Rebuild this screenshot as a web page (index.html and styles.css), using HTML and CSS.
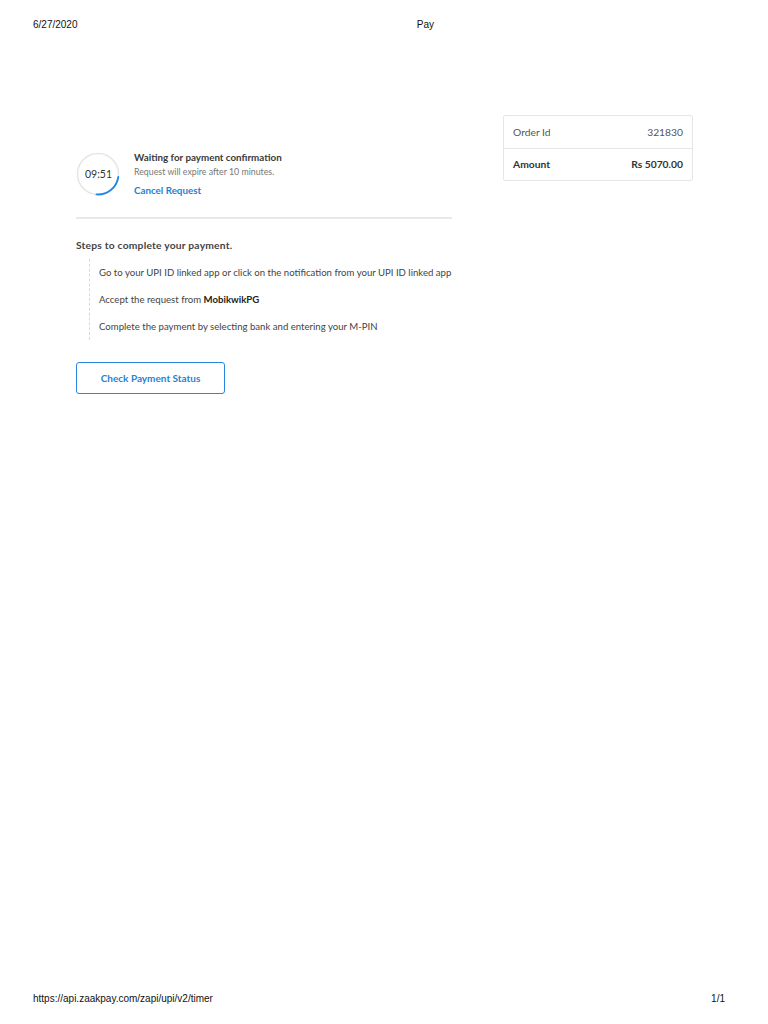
FILE: index.html
```html
<!DOCTYPE html>
<html>
<head>
<meta charset="utf-8">
<link rel="stylesheet" href="styles.css">
</head>
<body>
<div class="page">
  <header class="print-head">
    <span class="date">6/27/2020</span>
    <span class="title">Pay</span>
  </header>
  <main class="content">
    <section class="left">
      <div class="waiting">
        <div class="timer">
          <svg class="ring" width="44" height="44" viewBox="0 0 44 44">
            <circle cx="22" cy="22" r="20.5" fill="none" stroke="#e6e6e6" stroke-width="1.6"/>
            <path d="M42.3 25 A20.5 20.5 0 0 1 20.5 42.45" fill="none" stroke="#1e88e5" stroke-width="1.8" stroke-linecap="round"/>
          </svg>
          <span class="time">09:51</span>
        </div>
        <div class="wait-text">
          <div class="wait-title">Waiting for payment confirmation</div>
          <div class="wait-sub">Request will expire after 10 minutes.</div>
          <a class="cancel">Cancel Request</a>
        </div>
      </div>
      <div class="divider"></div>
      <div class="steps-title">Steps to complete your payment.</div>
      <ul class="steps">
        <li>Go to your UPI ID linked app or click on the notification from your UPI ID linked app</li>
        <li>Accept the request from <span class="strong">MobikwikPG</span></li>
        <li>Complete the payment by selecting bank and entering your M-PIN</li>
      </ul>
      <button class="check">Check Payment Status</button>
    </section>
    <aside class="order">
      <div class="row"><span>Order Id</span><span>321830</span></div>
      <div class="row bold"><span>Amount</span><span>Rs 5070.00</span></div>
    </aside>
  </main>
  <footer class="print-foot">
    <span>https://api.zaakpay.com/zapi/upi/v2/timer</span>
    <span>1/1</span>
  </footer>
</div>
</body>
</html>
```
FILE: styles.css
```css
* { box-sizing: border-box; }
html, body { margin: 0; padding: 0; background: #fff; }
.page {
  width: 768px;
  height: 1024px;
  display: flex;
  flex-direction: column;
  font-family: Lato, "Open Sans", sans-serif;
  color: #333;
}
.print-head, .print-foot {
  display: flex;
  justify-content: space-between;
  font-family: "Liberation Sans", Arial, sans-serif;
  font-size: 10px;
  color: #111;
}
.print-head {
  padding: 19px 0 0 33px;
  width: 434px;
  height: 115px;
}
.print-foot {
  margin-top: auto;
  padding: 0 43px 20px 33px;
}
.content {
  display: flex;
  align-items: flex-start;
  padding-left: 76px;
}
.left { width: 376px; }
.waiting {
  display: flex;
  align-items: flex-start;
  padding-top: 37px;
  padding-bottom: 19px;
}
.timer {
  position: relative;
  width: 44px;
  height: 44px;
  margin-right: 14px;
}
.ring { display: block; position: absolute; left: 0; top: 0; }
.time {
  position: absolute;
  left: 0; top: 0; width: 44px; height: 44px;
  display: flex; align-items: center; justify-content: center;
  font-size: 10.5px;
  color: #333;
  padding-left: 1px;
}
.wait-text { margin-top: -2px; }
.wait-title { font-size: 9.8px; font-weight: 700; color: #3a3a3a; line-height: 14px; }
.wait-sub { font-size: 8.8px; color: #777; line-height: 16px; }
.cancel { display: block; font-size: 9.8px; font-weight: 700; color: #1e7fd6; line-height: 16px; margin-top: 2px; }
.divider { height: 2px; background: #e8e8e8; }
.steps-title {
  font-size: 10.3px; font-weight: 700; color: #444;
  margin-top: 19px; line-height: 14px;
  letter-spacing: 0.2px;
}
.steps {
  list-style: none;
  margin: 7px 0 0 13px;
  padding: 0 0 0 9px;
  border-left: 1px dashed #d8d8d8;
}
.steps li {
  font-size: 9.6px;
  color: #444;
  line-height: 13px;
  padding: 7px 0;
  white-space: nowrap;
}
.strong { color: #222; font-weight: 700; }
.check {
  display: block;
  margin-top: 22px;
  width: 149px;
  height: 32px;
  padding-bottom: 2px;
  background: #fff;
  border: 1px solid #2a87df;
  border-radius: 3px;
  color: #2a7fd0;
  font-family: Lato, "Open Sans", sans-serif;
  font-size: 10px;
  font-weight: 700;
}
.order {
  width: 190px;
  margin-left: 51px;
  border: 1px solid #e6e6e6;
  border-radius: 2px;
}
.row {
  display: flex;
  justify-content: space-between;
  align-items: center;
  height: 32px;
  padding: 0 9px 1px 9px;
  font-size: 10.3px;
  color: #555;
}
.row + .row { border-top: 1px solid #e6e6e6; }
.row.bold { font-weight: 700; color: #333; }
```
